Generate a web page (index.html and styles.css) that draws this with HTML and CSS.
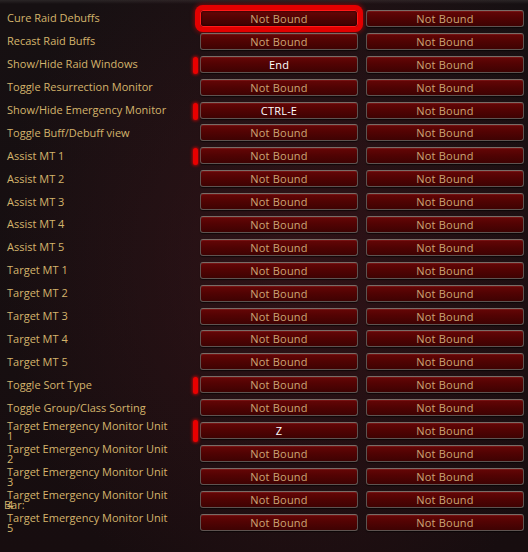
FILE: index.html
```html
<!DOCTYPE html>
<html lang="en">
<head>
    <meta charset="UTF-8">
    <meta name="viewport" content="width=device-width, initial-scale=1.0">
    <title>Key Bindings</title>
    <link rel="stylesheet" href="styles.css">
</head>
<body>
    <div class="bindings">

        <div class="row">
            <div class="label">Cure Raid Debuffs</div>
            <div class="key selected">Not Bound</div>
            <div class="key">Not Bound</div>
        </div>
        <div class="row">
            <div class="label">Recast Raid Buffs</div>
            <div class="key">Not Bound</div>
            <div class="key">Not Bound</div>
        </div>
        <div class="row">
            <div class="label">Show/Hide Raid Windows</div>
            <div class="key bound marked">End</div>
            <div class="key">Not Bound</div>
        </div>
        <div class="row">
            <div class="label">Toggle Resurrection Monitor</div>
            <div class="key">Not Bound</div>
            <div class="key">Not Bound</div>
        </div>
        <div class="row">
            <div class="label">Show/Hide Emergency Monitor</div>
            <div class="key bound marked">CTRL-E</div>
            <div class="key">Not Bound</div>
        </div>
        <div class="row">
            <div class="label">Toggle Buff/Debuff view</div>
            <div class="key">Not Bound</div>
            <div class="key">Not Bound</div>
        </div>
        <div class="row">
            <div class="label">Assist MT 1</div>
            <div class="key marked">Not Bound</div>
            <div class="key">Not Bound</div>
        </div>
        <div class="row">
            <div class="label">Assist MT 2</div>
            <div class="key">Not Bound</div>
            <div class="key">Not Bound</div>
        </div>
        <div class="row">
            <div class="label">Assist MT 3</div>
            <div class="key">Not Bound</div>
            <div class="key">Not Bound</div>
        </div>
        <div class="row">
            <div class="label">Assist MT 4</div>
            <div class="key">Not Bound</div>
            <div class="key">Not Bound</div>
        </div>
        <div class="row">
            <div class="label">Assist MT 5</div>
            <div class="key">Not Bound</div>
            <div class="key">Not Bound</div>
        </div>
        <div class="row">
            <div class="label">Target MT 1</div>
            <div class="key">Not Bound</div>
            <div class="key">Not Bound</div>
        </div>
        <div class="row">
            <div class="label">Target MT 2</div>
            <div class="key">Not Bound</div>
            <div class="key">Not Bound</div>
        </div>
        <div class="row">
            <div class="label">Target MT 3</div>
            <div class="key">Not Bound</div>
            <div class="key">Not Bound</div>
        </div>
        <div class="row">
            <div class="label">Target MT 4</div>
            <div class="key">Not Bound</div>
            <div class="key">Not Bound</div>
        </div>
        <div class="row">
            <div class="label">Target MT 5</div>
            <div class="key">Not Bound</div>
            <div class="key">Not Bound</div>
        </div>
        <div class="row">
            <div class="label">Toggle Sort Type</div>
            <div class="key marked">Not Bound</div>
            <div class="key">Not Bound</div>
        </div>
        <div class="row">
            <div class="label">Toggle Group/Class Sorting</div>
            <div class="key">Not Bound</div>
            <div class="key">Not Bound</div>
        </div>
        <div class="row">
            <div class="label two">Target Emergency Monitor Unit 1</div>
            <div class="key bound marked tall">Z</div>
            <div class="key">Not Bound</div>
        </div>
        <div class="row">
            <div class="label two">Target Emergency Monitor Unit 2</div>
            <div class="key">Not Bound</div>
            <div class="key">Not Bound</div>
        </div>
        <div class="row">
            <div class="label two">Target Emergency Monitor Unit 3</div>
            <div class="key">Not Bound</div>
            <div class="key">Not Bound</div>
        </div>
        <div class="row">
            <div class="label two">Target Emergency Monitor Unit 4<span class="stray">Bar:</span></div>
            <div class="key">Not Bound</div>
            <div class="key">Not Bound</div>
        </div>
        <div class="row">
            <div class="label two">Target Emergency Monitor Unit 5</div>
            <div class="key">Not Bound</div>
            <div class="key">Not Bound</div>
        </div>

    </div>
</body>
</html>
```

FILE: styles.css
```css
:root{
    --gold: #d4b46c;
    --key-text: #cca676;
    --mark: #e80000;
}
*{
    box-sizing: border-box;
}
body{
    margin: 0;
    width: 528px;
    height: 552px;
    overflow: hidden;
    font-family: "Open Sans", "Liberation Sans", sans-serif;
    background-color: #150c0e;
    background-image:
        radial-gradient(ellipse 300px 380px at 300px 260px, rgba(70, 22, 28, 0.55), rgba(0, 0, 0, 0)),
        linear-gradient(#2a2526 0, #161012 4px, #170d0f 100%);
}
.bindings{
    padding-top: 7px;
}
.row{
    display: grid;
    grid-template-columns: 192px 158px 158px;
    column-gap: 8px;
    align-items: center;
    height: 22.9px;
}
.label{
    color: var(--gold);
    font-size: 11px;
    line-height: 10px;
    padding-left: 7px;
    padding-right: 24px;
    position: relative;
}
.label.two{
    padding-top: 2px;
}
.stray{
    position: absolute;
    left: 4px;
    top: 12px;
}
.key{
    position: relative;
    height: 17px;
    line-height: 15px;
    text-align: center;
    font-size: 11px;
    letter-spacing: 0.2px;
    color: var(--key-text);
    border: 1px solid #5e5350;
    border-top-color: #7a6c66;
    border-radius: 3px;
    background: linear-gradient(#650606, #520303 45%, #3e0202);
    box-shadow: inset 0 1px 0 rgba(255, 120, 120, 0.12), 0 1px 1px rgba(0, 0, 0, 0.6);
}
.key.bound{
    color: #ffffff;
}
.key.selected{
    border-color: #ff1a1a;
    box-shadow: 0 0 0 5px #e30000, 0 0 4px 6px rgba(255, 0, 0, 0.4), inset 0 0 2px #000;
}
.key.marked::before{
    content: "";
    position: absolute;
    left: -8px;
    top: 0;
    width: 5px;
    height: 17px;
    border-radius: 3px;
    background: var(--mark);
    box-shadow: 0 0 3px 1px rgba(255, 0, 0, 0.6);
}
.key.tall::before{
    top: -3px;
    height: 22px;
}
```
